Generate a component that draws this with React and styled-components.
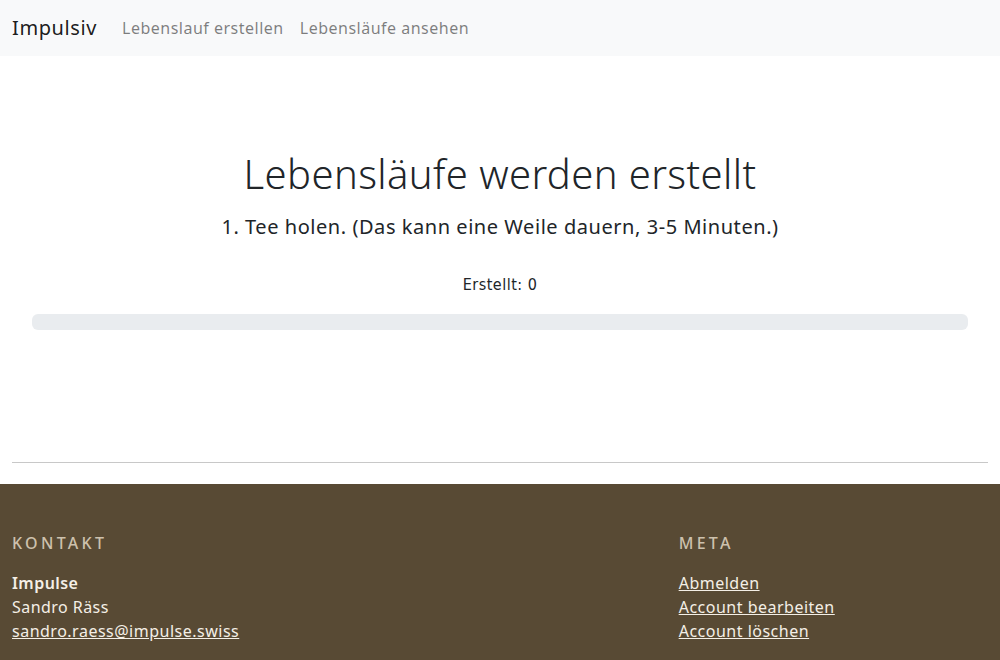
import React from "react";
import styled, { createGlobalStyle } from "styled-components";

const GlobalStyle = createGlobalStyle`
    * { box-sizing: border-box; }
    body {
        margin: 0;
        font-family: "Noto Sans", "Open Sans", sans-serif;
        font-size: 16px;
        line-height: 1.5;
        color: #212529;
        background: #fff;
    }
`;

const Nav = styled.nav`
    display: flex;
    align-items: center;
    height: 56px;
    padding: 0 12px;
    background-color: #f8f9fa;
`;

const Brand = styled.a`
    font-size: 20px;
    color: rgba(0, 0, 0, 0.9);
    text-decoration: none;
    margin-right: 17px;
    letter-spacing: 0.6px;
`;

const NavLink = styled.a`
    color: rgba(0, 0, 0, 0.5);
    text-decoration: none;
    padding: 8px;
    letter-spacing: 0.5px;
`;

const Main = styled.main`
    padding: 94px 12px 0;
    text-align: center;
`;

const Title = styled.h1`
    margin: 0;
    font-size: 40px;
    font-weight: 300;
    line-height: 48px;
    letter-spacing: 0.4px;
`;

const Subtitle = styled.h5`
    margin: 17px 0 0;
    font-size: 20px;
    font-weight: 400;
    line-height: 24px;
    letter-spacing: 0.55px;
`;

const Counter = styled.p`
    margin: 34px 0 0;
    font-family: "DejaVu Sans", sans-serif;
    font-stretch: condensed;
    font-size: 16px;
    line-height: 24px;
    letter-spacing: 0.5px;
    color: #212529;
`;

const Progress = styled.div`
    margin: 17px 20px 0;
    height: 16px;
    border-radius: 6px;
    background-color: #e9ecef;
    overflow: hidden;
`;

const Bar = styled.div`
    height: 100%;
    background-color: #0d6efd;
`;

const Rule = styled.hr`
    margin: 132px 12px 21px;
    border: 0;
    border-top: 1px solid #c8c8c8;
`;

const Footer = styled.footer`
    display: grid;
    grid-template-columns: 2fr 1fr;
    padding: 47px 0 40px;
    background-color: #584a34;
    color: #f4efe6;
`;

const Column = styled.div`
    padding: 0 12px;
    line-height: 24px;
`;

const FooterHeading = styled.h6`
    margin: 0 0 16px;
    font-size: 16px;
    font-weight: 500;
    line-height: 24px;
    letter-spacing: 3.3px;
    text-transform: uppercase;
    color: #cdc1ad;
`;

const Line = styled.div`
    font-weight: ${p => (p.bold ? 600 : 400)};
    letter-spacing: 0.45px;
`;

const FooterLink = styled.a`
    display: block;
    color: #f4efe6;
    text-decoration: underline;
    letter-spacing: 0.5px;
`;

const App = () => {
    const created = 0;
    const total = 10;

    return (
        <>
            <GlobalStyle />
            <Nav>
                <Brand href="#">Impulsiv</Brand>
                <NavLink href="#">Lebenslauf erstellen</NavLink>
                <NavLink href="#">Lebensläufe ansehen</NavLink>
            </Nav>
            <Main>
                <Title>Lebensläufe werden erstellt</Title>
                <Subtitle>1. Tee holen. (Das kann eine Weile dauern, 3-5 Minuten.)</Subtitle>
                <Counter>Erstellt: {created}</Counter>
                <Progress>
                    <Bar style={{ width: `${(created / total) * 100}%` }} />
                </Progress>
            </Main>
            <Rule />
            <Footer>
                <Column>
                    <FooterHeading>Kontakt</FooterHeading>
                    <Line bold>Impulse</Line>
                    <Line>Sandro Räss</Line>
                    <FooterLink href="#">sandro.raess@impulse.swiss</FooterLink>
                </Column>
                <Column>
                    <FooterHeading>Meta</FooterHeading>
                    <FooterLink href="#">Abmelden</FooterLink>
                    <FooterLink href="#">Account bearbeiten</FooterLink>
                    <FooterLink href="#">Account löschen</FooterLink>
                </Column>
            </Footer>
        </>
    );
};

export default App;
